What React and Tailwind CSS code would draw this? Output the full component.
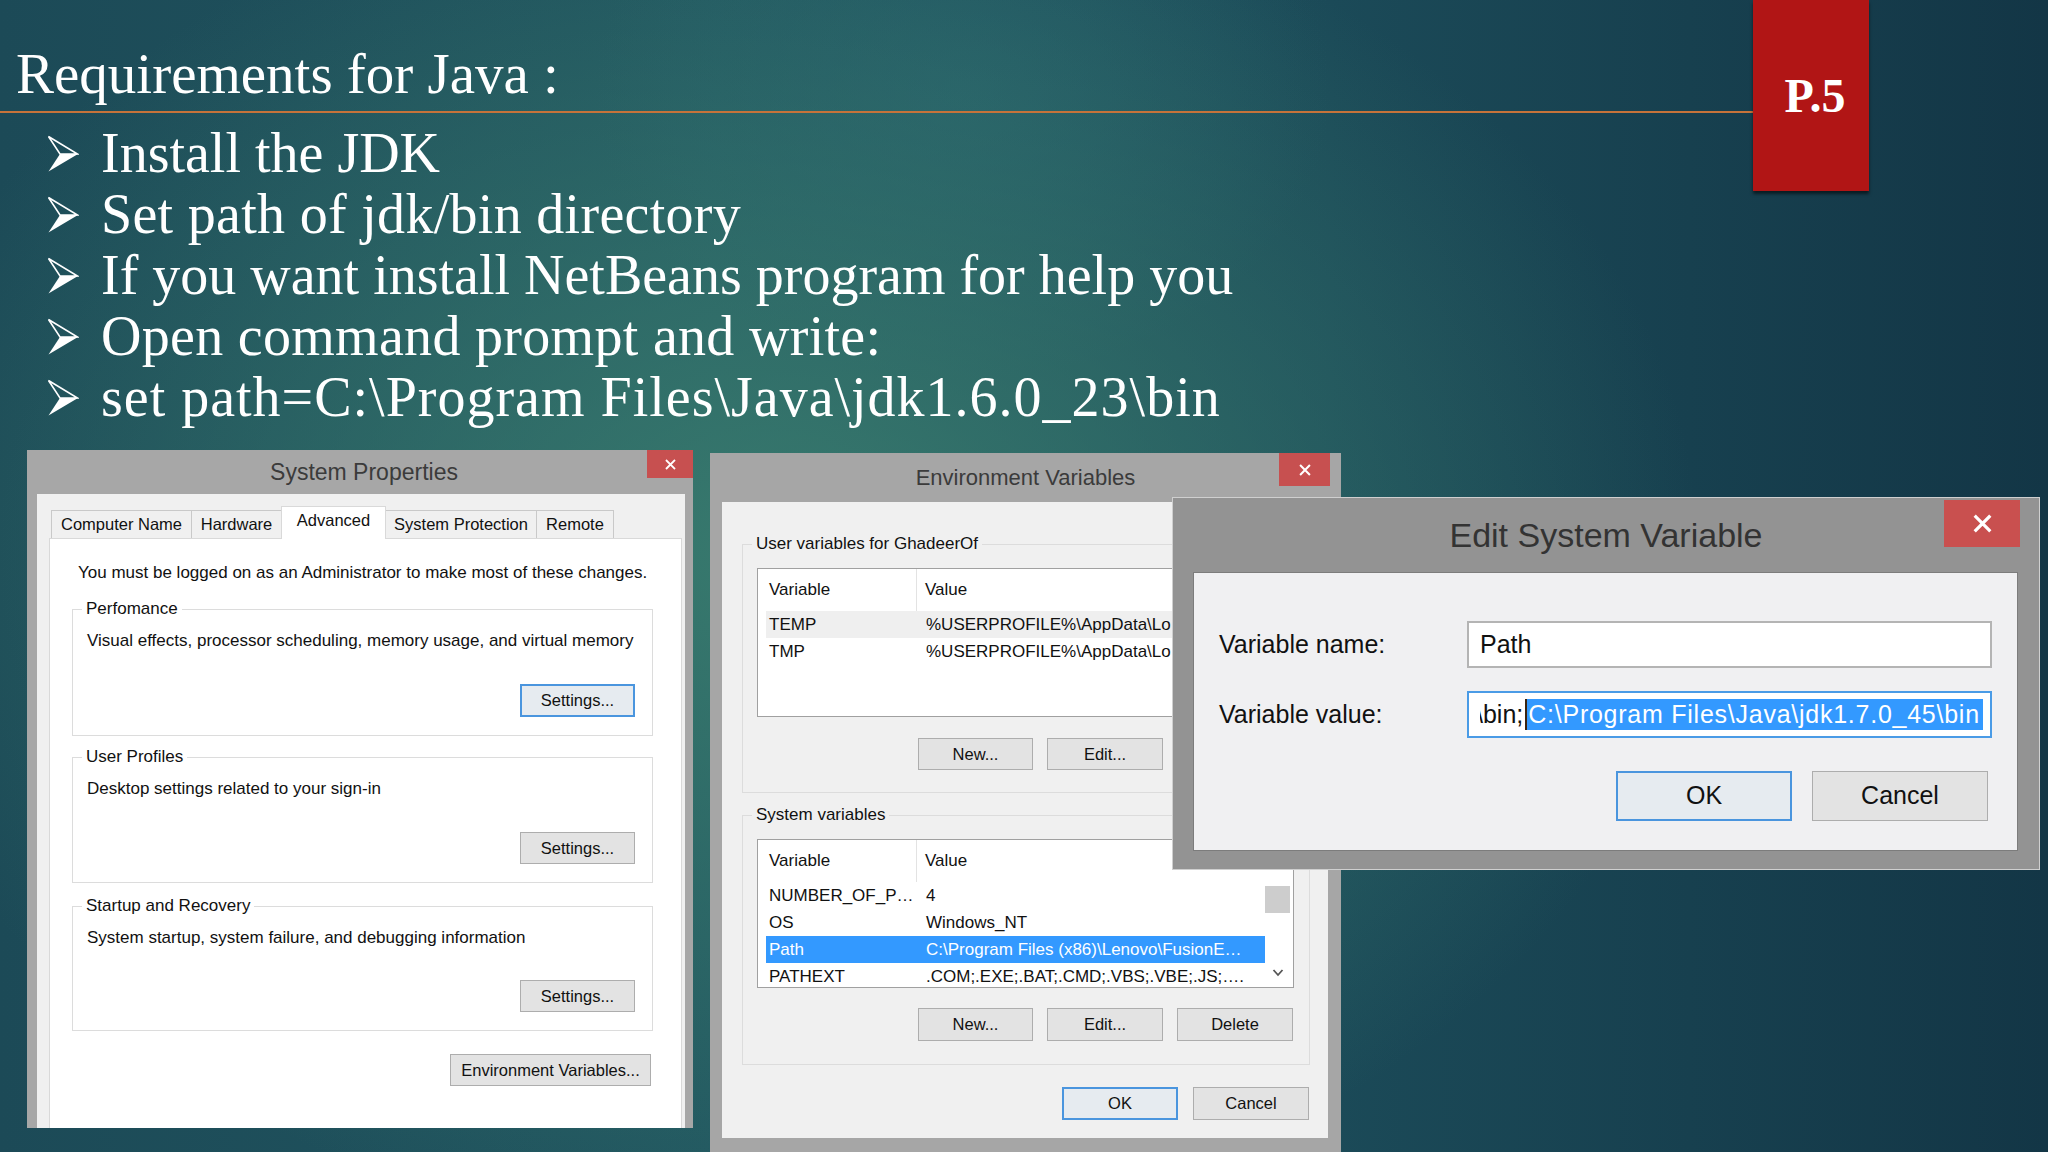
import React from "react";
import clsx from "clsx";

const SANS = "font-['Liberation_Sans',Arial,sans-serif]";
const SERIF = "font-['Liberation_Serif','Times_New_Roman',serif]";

function CloseX({ className }) {
  return (
    <svg viewBox="0 0 10 10" className={className}>
      <path d="M1.5 1.5L8.5 8.5M8.5 1.5L1.5 8.5" stroke="white" strokeWidth="1.7" strokeLinecap="square" fill="none" />
    </svg>
  );
}

function Arrow() {
  return (
    <svg width="32" height="38" viewBox="0 0 32 38" className="shrink-0 mt-[12px]">
      <polygon points="1.5,1.5 30.5,19 13,19" fill="none" stroke="white" strokeWidth="1.6" strokeLinejoin="miter" />
      <polygon points="13,19 31,19 1.5,36.5" fill="white" />
    </svg>
  );
}

function Btn({ children, focused, className }) {
  return (
    <div
      className={clsx(
        "flex items-center justify-center bg-[#e3e3e3] text-[#111] shrink-0",
        focused ? "border-2 border-[#4a95de] bg-[#e6ebf0]" : "border border-[#adadad]",
        className
      )}
    >
      {children}
    </div>
  );
}

function Group({ label, labelBg, className, children }) {
  return (
    <div className={clsx("relative border border-[#dcdcdc] flex flex-col shrink-0", className)}>
      <span className={clsx("absolute left-[9px] top-[-11px] px-[4px] leading-[20px]", labelBg)}>{label}</span>
      {children}
    </div>
  );
}

function Tab({ children, selected, className }) {
  return (
    <div
      className={clsx(
        "flex items-center justify-center border border-b-0 -ml-px first:ml-0",
        selected
          ? "h-[33px] mb-[-1px] bg-white border-[#d9d9d9] relative z-10 pb-[6px]"
          : "h-[28px] bg-[#f0f0f0] border-[#c9c9c9]",
        className
      )}
    >
      {children}
    </div>
  );
}

function SysProps() {
  const groupDesc = "mt-[21px] ml-[14px] leading-[20px]";
  return (
    <div className={clsx("absolute left-[27px] top-[450px] w-[666px] h-[678px] bg-[#a7a7a7] flex flex-col overflow-hidden text-[#111]", SANS)}>
      <div className="relative h-[44px] flex items-center justify-center shrink-0">
        <span className="text-[23px] text-[#3b3b3b] ml-[8px]">System Properties</span>
        <div className="absolute right-0 top-0 w-[46px] h-[28px] bg-[#c75050] flex items-center justify-center">
          <CloseX className="w-[11px] h-[11px]" />
        </div>
      </div>
      <div className="flex-1 ml-[10px] mr-[8px] bg-[#f0f0f0] flex flex-col pt-[12px] pl-[12px] pr-[3px] text-[17px]">
        <div className="flex items-end h-[32px] pl-[2px] shrink-0 text-[16.5px]">
          <Tab className="w-[141px] bg-[#dfeaf6] border-[#a9c3de]">Computer Name</Tab>
          <Tab className="w-[91px]">Hardware</Tab>
          <Tab selected className="w-[105px]">Advanced</Tab>
          <Tab className="w-[152px]">System Protection</Tab>
          <Tab className="w-[78px]">Remote</Tab>
        </div>
        <div className="flex-1 bg-white border border-[#d9d9d9] border-b-0 flex flex-col">
          <div className="mt-[24px] ml-[28px] leading-[20px] whitespace-nowrap">You must be logged on as an Administrator to make most of these changes.</div>

          <Group label="Perfomance" labelBg="bg-white" className="ml-[22px] mr-[28px] mt-[26px] h-[127px]">
            <div className={groupDesc}>Visual effects, processor scheduling, memory usage, and virtual memory</div>
            <Btn focused className="self-end mr-[17px] mt-[33px] w-[115px] h-[33px] text-[16.5px]">Settings...</Btn>
          </Group>

          <Group label="User Profiles" labelBg="bg-white" className="ml-[22px] mr-[28px] mt-[21px] h-[126px]">
            <div className={groupDesc}>Desktop settings related to your sign-in</div>
            <Btn className="self-end mr-[17px] mt-[33px] w-[115px] h-[32px] text-[16.5px]">Settings...</Btn>
          </Group>

          <Group label="Startup and Recovery" labelBg="bg-white" className="ml-[22px] mr-[28px] mt-[23px] h-[125px]">
            <div className={groupDesc}>System startup, system failure, and debugging information</div>
            <Btn className="self-end mr-[17px] mt-[32px] w-[115px] h-[32px] text-[16.5px]">Settings...</Btn>
          </Group>

          <Btn className="self-end mr-[30px] mt-[23px] w-[201px] h-[32px] text-[16.5px]">Environment Variables...</Btn>
        </div>
      </div>
    </div>
  );
}

function ListBox({ rows, scroll }) {
  return (
    <div className="mt-[23px] ml-[14px] w-[537px] h-[149px] border border-[#a0a0a0] bg-white flex overflow-hidden text-[17px] shrink-0">
      <div className="flex-1 min-w-0 pl-[8px] flex flex-col overflow-hidden">
        <div className="h-[42px] flex shrink-0">
          <div className="w-[151px] pl-[3px] flex items-center border-r border-[#e3e3e3]">Variable</div>
          <div className="pl-[8px] flex items-center">Value</div>
        </div>
        {rows.map((r) => (
          <div
            key={r[0]}
            className={clsx(
              "h-[27px] flex items-center shrink-0 whitespace-nowrap",
              r[2] === "sel" && "bg-[#3399ff] text-white",
              r[2] === "hover" && "bg-[#efefef]"
            )}
          >
            <div className="w-[151px] pl-[3px] shrink-0">{r[0]}</div>
            <div className="pl-[9px]">{r[1]}</div>
          </div>
        ))}
      </div>
      {scroll && (
        <div className="w-[25px] mr-[3px] flex flex-col items-center justify-between pt-[46px] pb-[10px] shrink-0">
          <div className="w-[25px] h-[27px] bg-[#cdcdcd]" />
          <svg width="12" height="9" viewBox="0 0 12 9">
            <path d="M1.5 2L6 7L10.5 2" stroke="#555" strokeWidth="1.8" fill="none" />
          </svg>
        </div>
      )}
    </div>
  );
}

function EnvVars() {
  return (
    <div className={clsx("absolute left-[710px] top-[453px] w-[631px] h-[699px] bg-[#a6a6a6] flex flex-col text-[#111]", SANS)}>
      <div className="relative h-[49px] flex items-center justify-center shrink-0">
        <span className="text-[22px] text-[#3b3b3b]">Environment Variables</span>
        <div className="absolute right-[11px] top-0 w-[51px] h-[33px] bg-[#c75050] flex items-center justify-center">
          <CloseX className="w-[12px] h-[12px]" />
        </div>
      </div>
      <div className="flex-1 ml-[12px] mr-[13px] mb-[14px] bg-[#f0f0f0] flex flex-col text-[17px]">
        <Group label="User variables for GhadeerOf" labelBg="bg-[#f0f0f0]" className="mt-[42px] ml-[20px] w-[568px] h-[249px]">
          <ListBox
            rows={[
              ["TEMP", "%USERPROFILE%\\AppData\\Lo", "hover"],
              ["TMP", "%USERPROFILE%\\AppData\\Lo", ""],
            ]}
          />
          <div className="mt-[21px] flex justify-end gap-[14px] mr-[16px] text-[16.5px]">
            <Btn className="w-[115px] h-[32px]">New...</Btn>
            <Btn className="w-[116px] h-[32px]">Edit...</Btn>
            <Btn className="w-[116px] h-[32px]">Delete</Btn>
          </div>
        </Group>

        <Group label="System variables" labelBg="bg-[#f0f0f0]" className="mt-[22px] ml-[20px] w-[568px] h-[250px]">
          <ListBox
            scroll
            rows={[
              ["NUMBER_OF_P\u2026", "4", ""],
              ["OS", "Windows_NT", ""],
              ["Path", "C:\\Program Files (x86)\\Lenovo\\FusionE\u2026", "sel"],
              ["PATHEXT", ".COM;.EXE;.BAT;.CMD;.VBS;.VBE;.JS;\u2026.", ""],
            ]}
          />
          <div className="mt-[20px] flex justify-end gap-[14px] mr-[16px] text-[16.5px]">
            <Btn className="w-[115px] h-[33px]">New...</Btn>
            <Btn className="w-[116px] h-[33px]">Edit...</Btn>
            <Btn className="w-[116px] h-[33px]">Delete</Btn>
          </div>
        </Group>

        <div className="mt-[22px] flex justify-end gap-[15px] mr-[19px] text-[16.5px]">
          <Btn focused className="w-[116px] h-[33px]">OK</Btn>
          <Btn className="w-[116px] h-[33px]">Cancel</Btn>
        </div>
      </div>
    </div>
  );
}

function EditVar() {
  return (
    <div className={clsx("absolute left-[1172px] top-[497px] w-[868px] h-[373px] bg-[#939393] border border-[#cfcfcf] flex flex-col text-[#111] z-20", SANS)}>
      <div className="relative h-[74px] flex items-center justify-center shrink-0">
        <span className="text-[34px] text-[#333]">Edit System Variable</span>
        <div className="absolute right-[19px] top-[2px] w-[76px] h-[47px] bg-[#c9504f] flex items-center justify-center">
          <CloseX className="w-[19px] h-[19px]" />
        </div>
      </div>
      <div className="flex-1 ml-[20px] mr-[21px] mb-[18px] bg-[#f0f0f2] border border-[#7c7c7c] flex flex-col text-[25px]">
        <div className="mt-[48px] flex items-center pl-[25px]">
          <div className="w-[248px] shrink-0">Variable name:</div>
          <div className="w-[525px] h-[47px] bg-white border-2 border-[#b4b4b4] flex items-center pl-[11px] shrink-0">Path</div>
        </div>
        <div className="mt-[23px] flex items-center pl-[25px]">
          <div className="w-[248px] shrink-0">Variable value:</div>
          <div className="w-[525px] h-[47px] bg-white border-2 border-[#4a9be6] flex items-center shrink-0">
            <div className="ml-[11px] overflow-hidden flex items-center whitespace-nowrap">
              <span className="ml-[-4px]">\bin;</span>
              <span className="w-[2px] h-[31px] bg-[#3a2410] ml-[2px]" />
              <span className="h-[31px] bg-[#3399ff] text-white flex items-center pl-[1px] pr-[3px] tracking-[0.75px]">C:\Program Files\Java\jdk1.7.0_45\bin</span>
            </div>
          </div>
        </div>
        <div className="mt-[33px] flex justify-end gap-[20px] pr-[29px]">
          <Btn focused className="w-[176px] h-[50px]">OK</Btn>
          <Btn className="w-[176px] h-[50px]">Cancel</Btn>
        </div>
      </div>
    </div>
  );
}

const bullets = [
  { t: "Install the JDK", c: "" },
  { t: "Set path of jdk/bin directory", c: "tracking-[0.3px]" },
  { t: "If you want install NetBeans program for help you", c: "" },
  { t: "Open command prompt and write:", c: "tracking-[0.3px]" },
  { t: "set path=C:\\Program Files\\Java\\jdk1.6.0_23\\bin", c: "tracking-[1px]" },
];

export default function App() {
  return (
    <div className="relative w-[2048px] h-[1152px] overflow-hidden bg-[radial-gradient(ellipse_45%_60%_at_38%_48%,rgba(60,128,112,0.85),rgba(60,128,112,0)),radial-gradient(ellipse_18%_25%_at_47%_8%,rgba(40,100,110,0.6),rgba(40,100,110,0)),linear-gradient(90deg,#1c4a57_0%,#215660_35%,#1b4a58_65%,#133646_100%)]">
      <div className={clsx("pt-[42px] text-white", SERIF)}>
        <h1 className="pl-[16px] text-[57px] leading-[64px] font-normal">Requirements for Java :</h1>
        <div className="mt-[5px] h-[2px] w-[1753px] bg-[#c6733a]" />
        <ul className="mt-[10px] pl-[47px] flex flex-col">
          {bullets.map((b) => (
            <li key={b.t} className="flex items-start gap-[22px] h-[61px]">
              <Arrow />
              <span className={clsx("text-[56px] leading-[61px] whitespace-nowrap", b.c)}>{b.t}</span>
            </li>
          ))}
        </ul>
      </div>

      <div className={clsx("absolute left-[1753px] top-0 w-[116px] h-[191px] bg-[#b11515] shadow-[0_3px_3px_rgba(0,0,0,0.55)] flex justify-center pt-[72px] pl-[8px] text-white text-[48px] leading-[48px] font-bold", SERIF)}>
        P.5
      </div>

      <SysProps />
      <EnvVars />
      <EditVar />
    </div>
  );
}
